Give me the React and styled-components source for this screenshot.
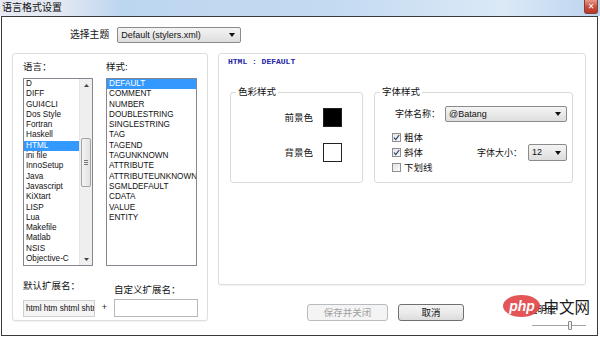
import React from 'react';
import styled, { createGlobalStyle } from 'styled-components';

const GlobalStyle = createGlobalStyle`
  html, body {
    margin: 0;
    padding: 0;
    background: #fff;
  }
  body {
    font-family: "Liberation Sans", "Noto Sans CJK SC", sans-serif;
  }
`;

const cjk = `"Liberation Sans", "Noto Sans CJK SC", sans-serif`;

const Window = styled.div`
  position: relative;
  width: 600px;
  height: 338px;
  display: flex;
  flex-direction: column;
  background: #fff;
  overflow: hidden;
`;

const TitleBar = styled.div`
  height: 16px;
  display: flex;
  align-items: flex-start;
  justify-content: space-between;
  padding-left: 2px;
  background: linear-gradient(
    90deg,
    #e6e9f2 0,
    #e3e8f2 62px,
    #bdd6ef 120px,
    #c3daf1 55%,
    #dbe9f7 84%,
    #bcd4ee 100%
  );
`;

const Title = styled.span`
  font: 10px/15px ${cjk};
  color: #111;
`;

const CloseBtn = styled.div`
  width: 12px;
  height: 13px;
  margin-right: 2px;
  border: 1px solid #8c3b31;
  border-top: none;
  border-radius: 0 0 3px 3px;
  background: linear-gradient(#e69a8e, #c9493a 55%, #b83a2c);
  color: #fff;
  font: bold 8px/13px "DejaVu Sans", sans-serif;
  text-align: center;
`;

const Frame = styled.div`
  flex: 1;
  margin: 0 2px 2px 1px;
  border: 1px solid #3a3a3a;
  display: flex;
  flex-direction: column;
  min-height: 0;
`;

const ThemeRow = styled.div`
  display: flex;
  align-items: center;
  gap: 8px;
  padding: 10px 0 0 68px;
`;

const Label = styled.span`
  font: ${p => p.$size || 9.5}px/12px ${cjk};
  color: ${p => (p.$muted ? '#9a9a9a' : '#111')};
  white-space: nowrap;
  padding-top: ${p => p.$drop || 0}px;
`;

const Combo = styled.div`
  box-sizing: border-box;
  width: ${p => p.$w}px;
  height: ${p => p.$h || 16}px;
  display: flex;
  align-items: center;
  justify-content: space-between;
  padding: 0 5px 0 3px;
  border: 1px solid #8b8b8b;
  border-radius: 2px;
  background: linear-gradient(#f4f4f4, #e9e9e9 50%, #dddddd);
  font: 9px/1 "Liberation Sans", sans-serif;
  color: #111;
`;

const Arrow = () => (
  <svg width="6" height="4" viewBox="0 0 6 4">
    <path d="M0 0h6L3 4z" fill="#111" />
  </svg>
);

const MainRow = styled.div`
  display: flex;
  gap: 10px;
  margin-top: 10px;
  padding-left: 10px;
`;

const Panel = styled.div`
  box-sizing: border-box;
  width: ${p => p.$w}px;
  height: ${p => p.$h}px;
  border: 1px solid #dedede;
  border-radius: 3px;
  box-shadow: 0 1px 1px rgba(0, 0, 0, 0.05);
  background: #fff;
`;

const LeftPanel = styled(Panel)`
  padding: 7px 0 0 10px;
`;

const ListGrid = styled.div`
  display: grid;
  grid-template-columns: 70px 91px;
  column-gap: 13px;
  row-gap: 5px;
`;

const ListBox = styled.div`
  box-sizing: border-box;
  height: 188px;
  display: flex;
  border: 1px solid #828790;
  background: #fff;
  overflow: hidden;
`;

const Items = styled.div`
  flex: 1;
  min-width: 0;
  display: flex;
  flex-direction: column;
`;

const Item = styled.div`
  height: 10.3px;
  padding-left: 2px;
  font: 8.2px/10.3px "Liberation Sans", sans-serif;
  white-space: nowrap;
  color: ${p => (p.$selected ? '#fff' : '#111')};
  background: ${p => (p.$selected ? '#3399ff' : 'transparent')};
`;

const ScrollBar = styled.div`
  width: 12px;
  display: flex;
  flex-direction: column;
  align-items: center;
  background: #efefef;
  border-left: 1px solid #e4e4e4;
`;

const ScrollArrow = styled.div`
  height: 12px;
  display: flex;
  align-items: center;
  justify-content: center;
`;

const ScrollTrack = styled.div`
  flex: 1;
  width: 100%;
  display: flex;
  justify-content: center;
`;

const Thumb = styled.div`
  box-sizing: border-box;
  width: 10px;
  height: 49px;
  margin-top: 47px;
  border: 1px solid #a3a3a3;
  border-radius: 2px;
  background: linear-gradient(90deg, #f4f4f4, #e2e2e2);
  display: flex;
  align-items: center;
  justify-content: center;
`;

const Grip = styled.div`
  width: 4px;
  height: 5px;
  border-top: 1px solid #777;
  border-bottom: 1px solid #777;
  box-sizing: border-box;
  position: relative;
  &::after {
    content: '';
    position: absolute;
    left: 0;
    right: 0;
    top: 1px;
    border-top: 1px solid #777;
  }
`;

const ExtGrid = styled.div`
  display: grid;
  grid-template-columns: 72px 19px 84px;
  row-gap: 3px;
  margin-top: 14px;
  align-items: start;
`;

const Plus = styled.span`
  font: 9px/17px "Liberation Sans", sans-serif;
  text-align: center;
  color: #222;
`;

const TextBox = styled.div`
  box-sizing: border-box;
  height: ${p => p.$h}px;
  margin-top: ${p => p.$top || 0}px;
  padding: 0 2px;
  overflow: hidden;
  white-space: nowrap;
  border: 1px solid ${p => (p.$readonly ? '#cfcfcf' : '#b8b8b8')};
  background: ${p => (p.$readonly ? '#f4f4f4' : '#fff')};
  font: 8.2px/${p => p.$h - 2}px "Liberation Sans", sans-serif;
  color: #111;
`;

const RightCol = styled.div`
  width: 368px;
  display: flex;
  flex-direction: column;
`;

const RightPanel = styled(Panel)`
  padding: 3px 0 0 9px;
`;

const Heading = styled.div`
  font: bold 8px/10px "Liberation Mono", monospace;
  color: #2424a6;
`;

const GroupRow = styled.div`
  display: flex;
  gap: 11px;
  margin-top: 19px;
  padding-left: 2px;
`;

const Group = styled.fieldset`
  box-sizing: border-box;
  width: ${p => p.$w}px;
  height: 97px;
  margin: 0;
  padding: 0;
  border: 1px solid #dadada;
  border-radius: 3px;
  min-width: 0;
`;

const Legend = styled.legend`
  margin-left: 5px;
  padding: 0 2px;
  font: 9.5px/12px ${cjk};
  color: #111;
`;

const ColorGrid = styled.div`
  display: grid;
  grid-template-columns: 1fr 19px;
  column-gap: 10px;
  row-gap: 16px;
  align-items: center;
  padding: 10px 20px 0 0;
  justify-items: end;
`;

const Swatch = styled.div`
  box-sizing: border-box;
  width: 19px;
  height: 19px;
  border: 1px solid #222;
  background: ${p => p.$color};
`;

const FontNameRow = styled.div`
  display: flex;
  align-items: center;
  gap: 5px;
  padding: 8px 0 0 20px;
`;

const FontBody = styled.div`
  display: flex;
  align-items: center;
  margin-top: 8px;
  padding: 0 5px 0 17px;
`;

const CheckCol = styled.div`
  display: flex;
  flex-direction: column;
`;

const CheckRow = styled.label`
  display: flex;
  align-items: center;
  gap: 3px;
  height: 15px;
  font: 9.5px/15px ${cjk};
  color: #111;
`;

const Box = styled.span`
  box-sizing: border-box;
  width: 9px;
  height: 9px;
  border: 1px solid #8f8f8f;
  background: linear-gradient(135deg, #e4e4e4, #fafafa);
  display: flex;
  align-items: center;
  justify-content: center;
`;

const SizeRow = styled.div`
  display: flex;
  align-items: center;
  gap: 6px;
  margin-left: auto;
`;

const ButtonRow = styled.div`
  display: flex;
  align-items: flex-start;
  gap: 10px;
  margin-top: 19px;
  padding-left: 89px;
`;

const Button = styled.div`
  box-sizing: border-box;
  width: ${p => p.$w}px;
  height: 17px;
  border: 1px solid ${p => (p.$disabled ? '#b8bcbf' : '#707070')};
  border-radius: 3px;
  background: ${p =>
    p.$disabled ? '#f4f4f4' : 'linear-gradient(#f3f3f3, #ebebeb 50%, #dcdcdc)'};
  color: ${p => (p.$disabled ? '#a0a0a0' : '#111')};
  font: 9.5px/15px ${cjk};
  text-align: center;
`;

const Opacity = styled.div`
  margin-left: auto;
  width: 58px;
  display: flex;
  flex-direction: column;
`;

const Slider = styled.div`
  position: relative;
  height: 9px;
  margin: 0 0 0 4px;
  border-bottom: 1px solid #a5a5a5;
`;

const SliderThumb = styled.div`
  position: absolute;
  left: 36px;
  bottom: -5px;
  box-sizing: border-box;
  width: 4px;
  height: 9px;
  border: 1px solid #8a8a8a;
  border-radius: 1px;
  background: #f2f2f2;
`;

const Watermark = styled.div`
  position: absolute;
  right: 10px;
  top: 295px;
  display: flex;
  align-items: center;
  gap: 3px;
`;

const PhpBadge = styled.span`
  width: 37px;
  height: 22px;
  border-radius: 50%;
  background: #e2474a;
  color: #fff;
  font: italic bold 14px/22px "Liberation Sans", sans-serif;
  text-align: center;
  opacity: 0.92;
`;

const PhpText = styled.span`
  font: 15.5px/20px "Noto Sans CJK SC", sans-serif;
  color: #1a1a1a;
`;

const Check = () => (
  <svg width="7" height="7" viewBox="0 0 7 7">
    <path d="M1 3.6 2.8 5.6 6.2 1" fill="none" stroke="#2c3f73" strokeWidth="1.2" />
  </svg>
);

const languages = [
  'D', 'DIFF', 'GUI4CLI', 'Dos Style', 'Fortran', 'Haskell', 'HTML', 'ini file',
  'InnoSetup', 'Java', 'Javascript', 'KiXtart', 'LISP', 'Lua', 'Makefile',
  'Matlab', 'NSIS', 'Objective-C',
];

const styles = [
  'DEFAULT', 'COMMENT', 'NUMBER', 'DOUBLESTRING', 'SINGLESTRING', 'TAG', 'TAGEND',
  'TAGUNKNOWN', 'ATTRIBUTE', 'ATTRIBUTEUNKNOWN', 'SGMLDEFAULT', 'CDATA', 'VALUE',
  'ENTITY',
];

const checks = [
  { label: '粗体', checked: true },
  { label: '斜体', checked: true },
  { label: '下划线', checked: false },
];

export default function App() {
  return (
    <Window>
      <GlobalStyle />
      <TitleBar>
        <Title>语言格式设置</Title>
        <CloseBtn>✕</CloseBtn>
      </TitleBar>
      <Frame>
        <ThemeRow>
          <Label $size={9.8}>选择主题</Label>
          <Combo $w={124}>
            Default (stylers.xml)
            <Arrow />
          </Combo>
        </ThemeRow>

        <MainRow>
          <LeftPanel $w={196} $h={268}>
            <ListGrid>
              <Label>语言：</Label>
              <Label>样式:</Label>
              <ListBox>
                <Items>
                  {languages.map(l => (
                    <Item key={l} $selected={l === 'HTML'}>{l}</Item>
                  ))}
                </Items>
                <ScrollBar>
                  <ScrollArrow>
                    <svg width="5" height="3" viewBox="0 0 5 3"><path d="M0 3h5L2.5 0z" fill="#444" /></svg>
                  </ScrollArrow>
                  <ScrollTrack>
                    <Thumb><Grip /></Thumb>
                  </ScrollTrack>
                  <ScrollArrow>
                    <svg width="5" height="3" viewBox="0 0 5 3"><path d="M0 0h5L2.5 3z" fill="#444" /></svg>
                  </ScrollArrow>
                </ScrollBar>
              </ListBox>
              <ListBox>
                <Items>
                  {styles.map(s => (
                    <Item key={s} $selected={s === 'DEFAULT'}>{s}</Item>
                  ))}
                </Items>
              </ListBox>
            </ListGrid>
            <ExtGrid>
              <Label>默认扩展名：</Label>
              <span />
              <Label $drop={4}>自定义扩展名：</Label>
              <TextBox $h={17} $top={1} $readonly>html htm shtml shtm xhtml</TextBox>
              <Plus>+</Plus>
              <TextBox $h={18} />
            </ExtGrid>
          </LeftPanel>

          <RightCol>
            <RightPanel $w={368} $h={232}>
              <Heading>HTML : DEFAULT</Heading>
              <GroupRow>
                <Group $w={133}>
                  <Legend>色彩样式</Legend>
                  <ColorGrid>
                    <Label>前景色</Label>
                    <Swatch $color="#000" />
                    <Label>背景色</Label>
                    <Swatch $color="#fff" />
                  </ColorGrid>
                </Group>
                <Group $w={199}>
                  <Legend>字体样式</Legend>
                  <FontNameRow>
                    <Label $size={9}>字体名称：</Label>
                    <Combo $w={122}>
                      @Batang
                      <Arrow />
                    </Combo>
                  </FontNameRow>
                  <FontBody>
                    <CheckCol>
                      {checks.map(c => (
                        <CheckRow key={c.label}>
                          <Box>{c.checked && <Check />}</Box>
                          {c.label}
                        </CheckRow>
                      ))}
                    </CheckCol>
                    <SizeRow>
                      <Label $size={9}>字体大小：</Label>
                      <Combo $w={39} $h={17}>
                        12
                        <Arrow />
                      </Combo>
                    </SizeRow>
                  </FontBody>
                </Group>
              </GroupRow>
            </RightPanel>

            <ButtonRow>
              <Button $w={81} $disabled>保存并关闭</Button>
              <Button $w={66}>取消</Button>
              <Opacity>
                <Label>透明度</Label>
                <Slider>
                  <SliderThumb />
                </Slider>
              </Opacity>
            </ButtonRow>
          </RightCol>
        </MainRow>
      </Frame>
      <Watermark>
        <PhpBadge>php</PhpBadge>
        <PhpText>中文网</PhpText>
      </Watermark>
    </Window>
  );
}
